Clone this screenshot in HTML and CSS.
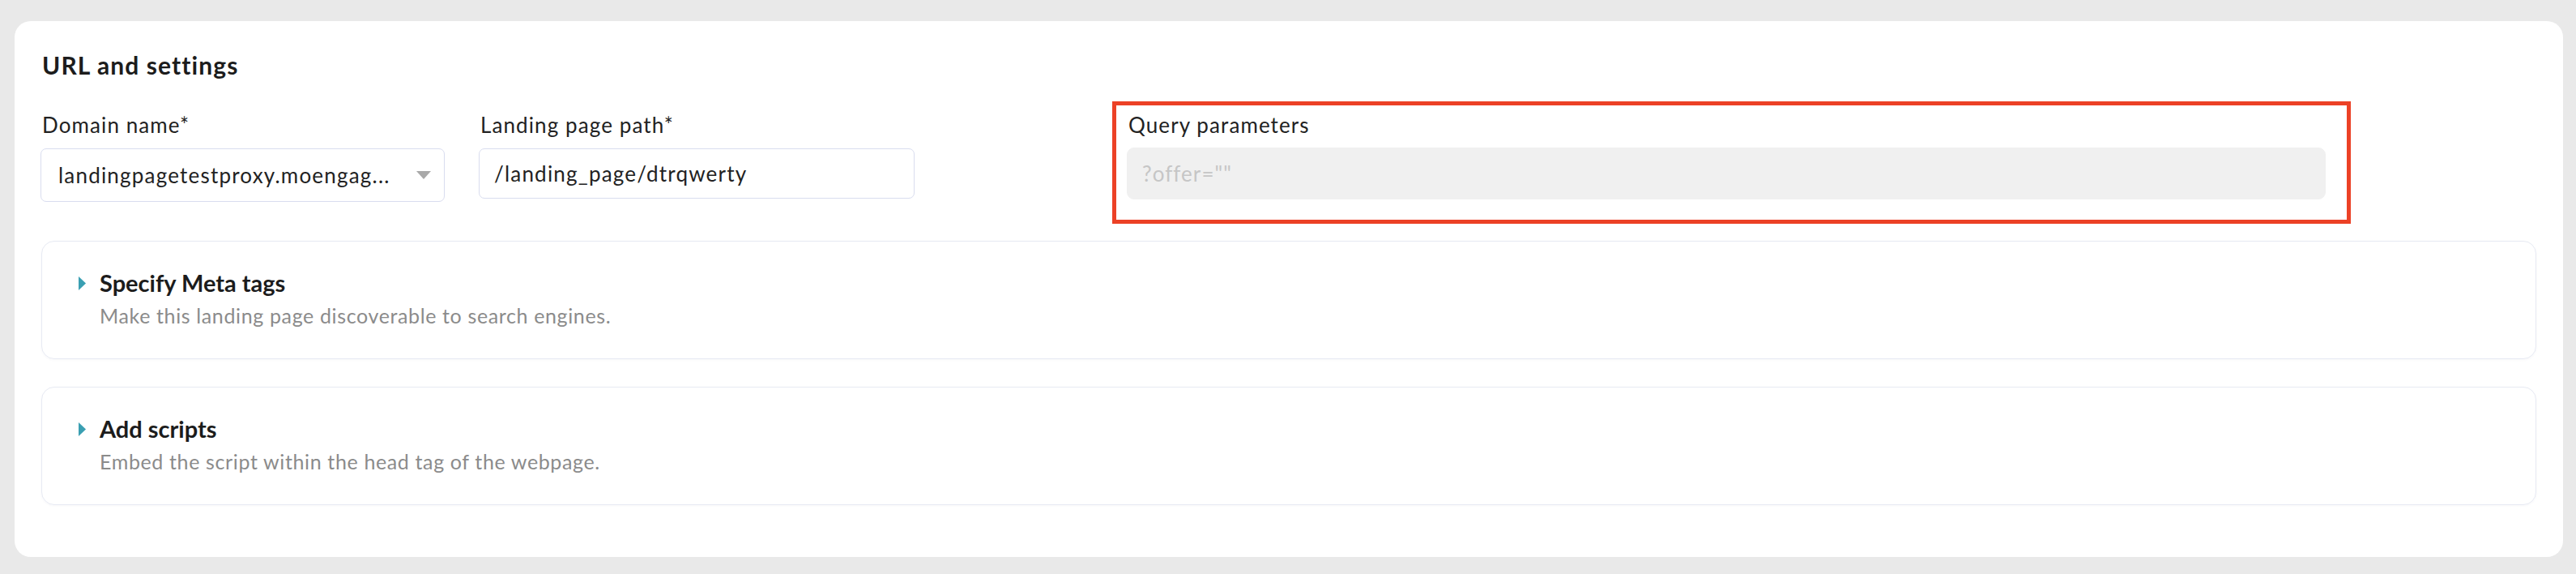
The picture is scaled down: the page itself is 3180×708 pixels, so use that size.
FILE: index.html
```html
<!DOCTYPE html>
<html lang="en">
<head>
<meta charset="utf-8">
<title>URL and settings</title>
<link rel="stylesheet" href="styles.css">
</head>
<body>
<main class="card">
  <h2 class="card-title">URL and settings</h2>
  <div class="fields">
    <div class="field field-domain">
      <label class="field-label">Domain name*</label>
      <div class="select">
        <span class="select-value">landingpagetestproxy.moengag...</span>
        <svg class="select-caret" width="18" height="10" viewBox="0 0 18 10"><polygon points="0,0 18,0 9,10" fill="#a9a9a9"/></svg>
      </div>
    </div>
    <div class="field field-path">
      <label class="field-label">Landing page path*</label>
      <div class="input">/landing_page/dtrqwerty</div>
    </div>
    <div class="field field-query">
      <label class="field-label">Query parameters</label>
      <div class="input input-disabled">?offer=""</div>
      <div class="highlight"></div>
    </div>
  </div>
  <section class="collapse">
    <div class="collapse-head">
      <svg class="collapse-caret" width="9" height="17" viewBox="0 0 9 17"><polygon points="0,0 9,8.5 0,17" fill="#3a9fb2"/></svg>
      <span class="collapse-title">Specify Meta tags</span>
    </div>
    <p class="collapse-desc">Make this landing page discoverable to search engines.</p>
  </section>
  <section class="collapse">
    <div class="collapse-head">
      <svg class="collapse-caret" width="9" height="17" viewBox="0 0 9 17"><polygon points="0,0 9,8.5 0,17" fill="#3a9fb2"/></svg>
      <span class="collapse-title">Add scripts</span>
    </div>
    <p class="collapse-desc">Embed the script within the head tag of the webpage.</p>
  </section>
</main>
</body>
</html>
```

FILE: styles.css
```css
* { box-sizing: border-box; }

html, body { margin: 0; }

body {
  background: #e9e9e9;
  padding: 26px 16px 21px 18px;
  font-family: "Lato", "Liberation Sans", sans-serif;
  color: #1f1f1f;
}

.card {
  position: relative;
  background: #ffffff;
  border-radius: 20px;
  padding: 37px 33px 64px 33px;
}

.card-title {
  margin: 0 0 44px 1px;
  font-size: 30px;
  line-height: 34px;
  letter-spacing: 1.1px;
  font-weight: 700;
  color: #1c1c1c;
}

.fields {
  display: flex;
  align-items: flex-start;
}

.field { display: flex; flex-direction: column; }
.field-domain { width: 499px; margin-left: -1px; }
.field-path { width: 538px; margin-left: 42px; }
.field-query { width: 1480px; margin-left: 262px; position: relative; }

.field-label {
  font-size: 26px;
  line-height: 26px;
  letter-spacing: 1.1px;
  color: #222222;
  margin: 0 0 16px 2px;
}

.select,
.input {
  display: flex;
  align-items: center;
  border: 1px solid #d9ddef;
  border-radius: 7px;
  background: #ffffff;
  font-size: 26px;
  letter-spacing: 1.2px;
  color: #222222;
  white-space: nowrap;
}

.select {
  height: 66px;
  padding: 0 16px 0 21px;
  justify-content: space-between;
}

.input {
  height: 62px;
  padding: 0 18px;
}

.input-disabled {
  height: 64px;
  margin-top: -1px;
  background: #f0f0f0;
  border-color: #f0f0f0;
  border-radius: 9px;
  color: #c6c6c6;
  letter-spacing: 1.05px;
}

.highlight {
  position: absolute;
  left: -18px;
  top: -16px;
  width: 1529px;
  height: 151px;
  border: 5px solid #ec4126;
  pointer-events: none;
}

.collapse {
  margin-top: 48px;
  border: 1px solid #e7eaf3;
  border-radius: 16px;
  padding: 35px 45px 39px 45px;
  box-shadow: 0 1px 3px rgba(40, 50, 90, 0.04);
}

.collapse + .collapse { margin-top: 34px; }

.collapse-head {
  display: flex;
  align-items: center;
  gap: 17px;
  height: 32px;
}

.collapse-title {
  font-size: 29px;
  line-height: 32px;
  font-weight: 700;
  color: #1c1c1c;
}

.collapse-desc {
  margin: 10px 0 0 26px;
  font-size: 25px;
  line-height: 28px;
  letter-spacing: 0.63px;
  color: #8b8b8b;
}
```
